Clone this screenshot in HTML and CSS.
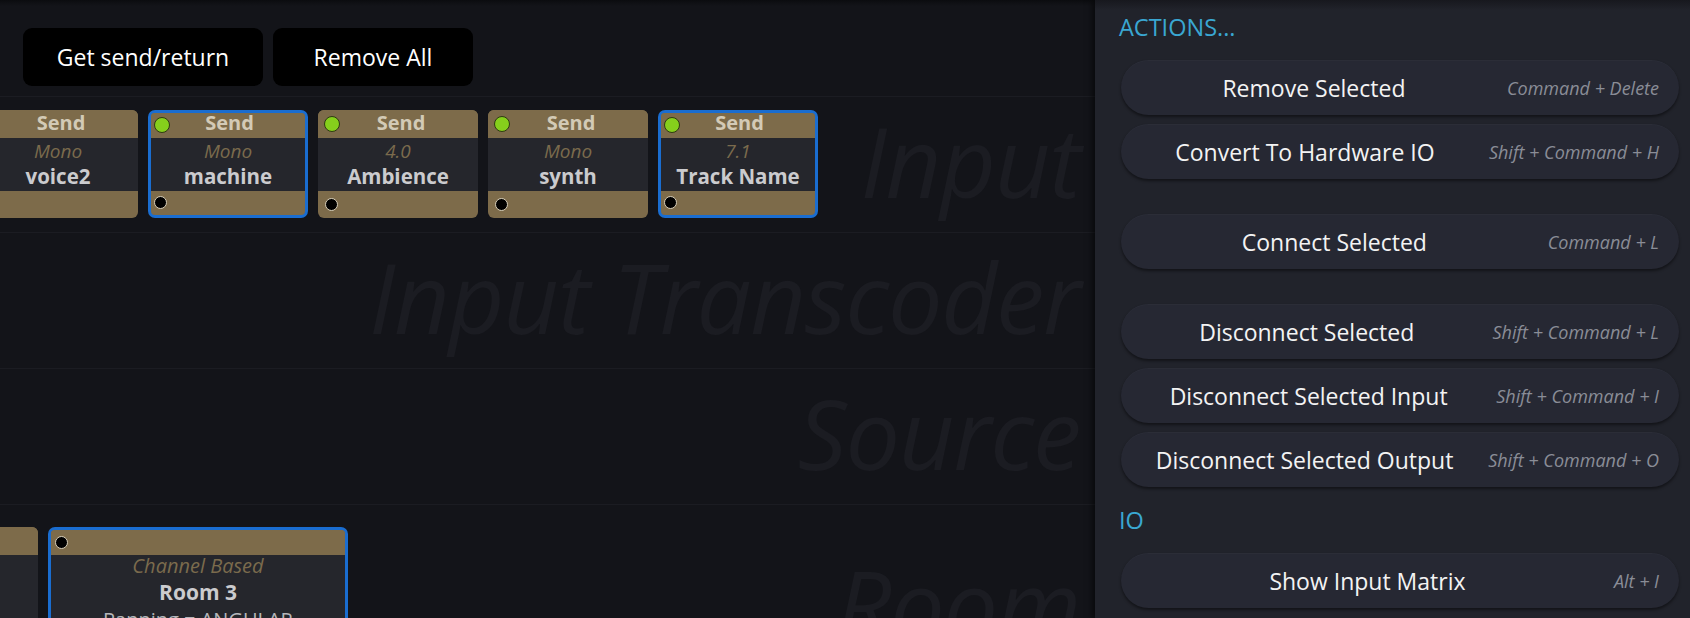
FILE: index.html
```html
<!DOCTYPE html>
<html>
<head>
<meta charset="utf-8">
<link rel="stylesheet" href="styles.css">
</head>
<body>
<div class="app">
  <div class="canvas">
    <div class="toolbar">
      <button class="tbtn">Get send/return</button>
      <button class="tbtn">Remove All</button>
    </div>

    <div class="band">
      <div class="wm">Input</div>
      <div class="row send-row">
        <div class="node">
          <div class="hd"><span class="dot-in"></span><span class="hd-t">Send</span></div>
          <div class="bd"><div class="fmt">Mono</div><div class="nm">voice2</div></div>
          <div class="ft"><span class="dot-out"></span></div>
        </div>
        <div class="node sel">
          <div class="hd"><span class="dot-in"></span><span class="hd-t">Send</span></div>
          <div class="bd"><div class="fmt">Mono</div><div class="nm">machine</div></div>
          <div class="ft"><span class="dot-out"></span></div>
        </div>
        <div class="node">
          <div class="hd"><span class="dot-in"></span><span class="hd-t">Send</span></div>
          <div class="bd"><div class="fmt">4.0</div><div class="nm">Ambience</div></div>
          <div class="ft"><span class="dot-out"></span></div>
        </div>
        <div class="node">
          <div class="hd"><span class="dot-in"></span><span class="hd-t">Send</span></div>
          <div class="bd"><div class="fmt">Mono</div><div class="nm">synth</div></div>
          <div class="ft"><span class="dot-out"></span></div>
        </div>
        <div class="node sel">
          <div class="hd"><span class="dot-in"></span><span class="hd-t">Send</span></div>
          <div class="bd"><div class="fmt">7.1</div><div class="nm">Track Name</div></div>
          <div class="ft"><span class="dot-out"></span></div>
        </div>
      </div>
    </div>

    <div class="band">
      <div class="wm">Input Transcoder</div>
    </div>

    <div class="band">
      <div class="wm">Source</div>
    </div>

    <div class="band band-last">
      <div class="wm">Room</div>
      <div class="row room-row">
        <div class="node room">
          <div class="hd"></div>
          <div class="bd"></div>
        </div>
        <div class="node room sel">
          <div class="hd"><span class="dot-out"></span></div>
          <div class="bd">
            <div class="fmt">Channel Based</div>
            <div class="nm">Room 3</div>
            <div class="pan">Panning = ANGULAR</div>
          </div>
        </div>
      </div>
    </div>
  </div>

  <div class="panel">
    <div class="ph">ACTIONS...</div>
    <div class="group">
      <div class="abtn"><span class="lbl">Remove Selected</span><span class="sc">Command + Delete</span></div>
      <div class="abtn"><span class="lbl">Convert To Hardware IO</span><span class="sc">Shift + Command + H</span></div>
    </div>
    <div class="group">
      <div class="abtn"><span class="lbl">Connect Selected</span><span class="sc">Command + L</span></div>
    </div>
    <div class="group">
      <div class="abtn"><span class="lbl">Disconnect Selected</span><span class="sc">Shift + Command + L</span></div>
      <div class="abtn"><span class="lbl">Disconnect Selected Input</span><span class="sc">Shift + Command + I</span></div>
      <div class="abtn"><span class="lbl">Disconnect Selected Output</span><span class="sc">Shift + Command + O</span></div>
    </div>
    <div class="ph ph-io">IO</div>
    <div class="group">
      <div class="abtn"><span class="lbl">Show Input Matrix</span><span class="sc">Alt + I</span></div>
    </div>
  </div>
</div>
</body>
</html>
```

FILE: styles.css
```css
* { box-sizing: border-box; }

html, body {
  margin: 0;
  padding: 0;
  width: 1690px;
  height: 618px;
  overflow: hidden;
  background: #131419;
  font-family: "Open Sans", "Noto Sans", sans-serif;
}

.app {
  display: flex;
  width: 1690px;
  height: 618px;
}

.canvas {
  flex: 0 0 1095px;
  display: flex;
  flex-direction: column;
  background: #131419;
  background-image: linear-gradient(#0b0c0f 0, #131419 6px);
  overflow: hidden;
}

.toolbar {
  flex: 0 0 97px;
  display: flex;
  gap: 10px;
  padding: 28px 0 0 23px;
  border-bottom: 1px solid #1b1c22;
}

.tbtn {
  height: 58px;
  border: 0;
  border-radius: 9px;
  background: #000;
  color: #fff;
  font-family: "Open Sans", sans-serif;
  font-size: 23px;
  padding: 0;
}
.tbtn:first-child { width: 240px; }
.tbtn:last-child { width: 200px; }

.band {
  flex: 0 0 136px;
  display: grid;
  border-bottom: 1px solid #1b1c22;
}
.band-last {
  flex: 1 0 auto;
  border-bottom: 0;
}

.band > * { grid-area: 1 / 1; }

.wm {
  justify-self: end;
  align-self: center;
  padding: 0 15px 8px 0;
  font-size: 97px;
  font-style: italic;
  font-weight: 400;
  letter-spacing: -1.3px;
  color: #1b1c22;
  line-height: 1;
  white-space: nowrap;
}
.band-last .wm {
  align-self: start;
  margin-top: 50px;
}

.row {
  display: flex;
  gap: 10px;
  align-self: start;
}
.send-row {
  margin: 13px 0 0 -22px;
}
.room-row {
  margin: 22px 0 0 -122px;
}

.node {
  flex: 0 0 160px;
  height: 108px;
  border-radius: 6px;
  overflow: hidden;
  display: flex;
  flex-direction: column;
  background: #7d6b4a;
  font-family: "Open Sans", sans-serif;
}
.node.sel {
  border: 3px solid #1a6dd0;
  border-radius: 7px;
}

.hd {
  flex: 1;
  display: grid;
  grid-template-columns: 26px 1fr 26px;
  align-items: center;
  padding-left: 6px;
  background: #7d6b4a;
}
.node.sel .hd, .node.sel .ft { padding-left: 3px; }

.hd-t {
  grid-column: 2;
  text-align: center;
  color: #d3cab6;
  font-weight: 700;
  font-size: 20px;
  line-height: 1;
  margin-top: -2px;
}
.node.sel .hd-t { margin-top: -5px; }

.dot-in {
  grid-column: 1;
  grid-row: 1;
  width: 16px;
  height: 16px;
  border-radius: 50%;
  background: #86cf1c;
  border: 1px solid #2e3a12;
}

.bd {
  flex: 0 0 53px;
  background: #25262c;
  display: flex;
  flex-direction: column;
  justify-content: center;
  align-items: center;
}

.fmt {
  font-style: italic;
  font-size: 19px;
  line-height: 23px;
  color: #7b6b4d;
}
.nm {
  font-weight: 700;
  font-size: 20.5px;
  line-height: 26px;
  color: #cbcbce;
}

.ft {
  flex: 1;
  display: flex;
  align-items: center;
  padding-left: 7px;
}

.dot-out {
  width: 13px;
  height: 13px;
  border-radius: 50%;
  background: #000;
  border: 1.5px solid #d9d0bb;
}

.node.room {
  flex: 0 0 160px;
  height: 200px;
}
.node.room.sel { flex-basis: 300px; }
.node.room .hd {
  flex: 0 0 28px;
  display: flex;
  padding-left: 7px;
}
.node.room.sel .hd { flex-basis: 25px; padding-left: 4px; }
.node.room .bd {
  flex: 1;
  justify-content: flex-start;
  padding-top: 0;
}
.node.room .fmt { font-size: 20px; line-height: 22px; }
.node.room .nm { font-size: 21px; line-height: 30px; }
.pan {
  font-size: 20px;
  line-height: 26px;
  color: #b5b6ba;
}

.panel {
  flex: 1;
  background: #21232b;
  background-image: linear-gradient(#17181e 0, #21232b 10px);
  box-shadow: -3px 0 6px rgba(0, 0, 0, 0.55);
  padding: 11px 11px 0 26px;
  display: flex;
  flex-direction: column;
}

.ph {
  color: #3aa7d2;
  font-size: 23.5px;
  line-height: 32px;
  height: 32px;
  margin-left: -2px;
  margin-bottom: 17px;
}
.ph-io { margin-top: 17px; margin-bottom: 17px; }

.group {
  display: flex;
  flex-direction: column;
  gap: 9px;
  margin-bottom: 35px;
}
.group:has(+ .ph-io) { margin-bottom: 0; }

.abtn {
  flex: 0 0 55px;
  height: 55px;
  border-radius: 28px;
  background: #262833;
  box-shadow: 0 2px 3px rgba(0, 0, 0, 0.45), inset 0 1px 0 rgba(255,255,255,0.025);
  display: flex;
  align-items: center;
  padding: 0 20px 0 0;
}
.lbl {
  flex: 1;
  text-align: center;
  color: #f3f3f3;
  font-size: 23px;
}
.sc {
  font-style: italic;
  color: #8a8d97;
  font-size: 18px;
}
```
